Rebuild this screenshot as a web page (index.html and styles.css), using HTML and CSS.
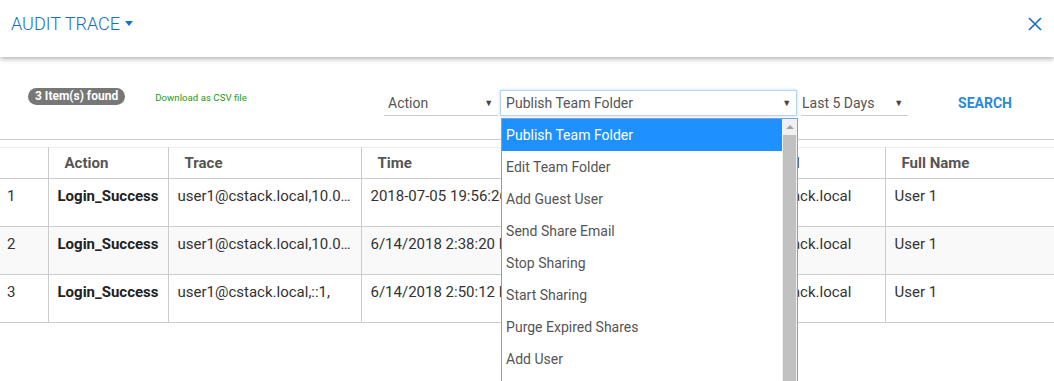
FILE: index.html
```html
<!DOCTYPE html>
<html>

<head>
    <meta name="viewport" content="width=device-width, initial-scale=1">
    <link rel="stylesheet" href="styles.css">
</head>

<body>
    <!-- Barra superior -->
    <div class="topbar">
        <span class="title">AUDIT TRACE</span>
        <svg class="title-caret" width="8" height="5" viewBox="0 0 8 5"><path d="M0 0h8L4 5z" fill="#1a6fc4"/></svg>
        <svg class="close" width="16" height="16" viewBox="0 0 16 16">
            <path d="M2 2L14 14M14 2L2 14" stroke="#1a6fc4" stroke-width="1.7" fill="none"/>
        </svg>
    </div>

    <!-- Filtros -->
    <div class="toolbar">
        <span class="badge">3 Item(s) found</span>
        <a class="csv" href="#">Download as CSV file</a>

        <div class="filters">
            <div class="select plain action-select">
                <span>Action</span>
                <span class="arrow">&#9660;</span>
            </div>
            <div class="select focused type-select">
                <span>Publish Team Folder</span>
                <span class="arrow">&#9660;</span>

                <div class="dropdown">
                    <ul class="options">
                        <li class="selected">Publish Team Folder</li>
                        <li>Edit Team Folder</li>
                        <li>Add Guest User</li>
                        <li>Send Share Email</li>
                        <li>Stop Sharing</li>
                        <li>Start Sharing</li>
                        <li>Purge Expired Shares</li>
                        <li>Add User</li>
                    </ul>
                    <div class="scrollbar">
                        <div class="scroll-up"></div>
                        <div class="scroll-thumb"></div>
                    </div>
                </div>
            </div>
            <div class="select plain days-select">
                <span>Last 5 Days</span>
                <span class="arrow">&#9660;</span>
            </div>
            <a class="search" href="#">SEARCH</a>
        </div>
    </div>

    <!-- Tabla de resultados -->
    <table class="grid">
        <colgroup>
            <col style="width:48px">
            <col style="width:120px">
            <col style="width:193px">
            <col style="width:352px">
            <col style="width:172px">
            <col style="width:169px">
        </colgroup>
        <thead>
            <tr>
                <th></th>
                <th>Action</th>
                <th>Trace</th>
                <th>Time</th>
                <th class="email-h">User Email</th>
                <th>Full Name</th>
            </tr>
        </thead>
        <tbody>
            <tr>
                <td class="num">1</td>
                <td class="act">Login_Success</td>
                <td class="trace">user1@cstack.local,10.0.0.52,</td>
                <td>2018-07-05 19:56:26</td>
                <td class="email">user1@cstack.local</td>
                <td>User 1</td>
            </tr>
            <tr class="alt">
                <td class="num">2</td>
                <td class="act">Login_Success</td>
                <td class="trace">user1@cstack.local,10.0.0.52,</td>
                <td>6/14/2018 2:38:20 PM</td>
                <td class="email">user1@cstack.local</td>
                <td>User 1</td>
            </tr>
            <tr>
                <td class="num">3</td>
                <td class="act">Login_Success</td>
                <td class="trace">user1@cstack.local,::1,</td>
                <td>6/14/2018 2:50:12 PM</td>
                <td class="email">user1@cstack.local</td>
                <td>User 1</td>
            </tr>
        </tbody>
    </table>
</body>

</html>
```

FILE: styles.css
```css
/* Estilos de la pagina de auditoria */
html,
body {
    height: 381px;
}

body {
    margin: 0;
    font-family: Roboto, "Liberation Sans", Arial, sans-serif;
    color: #333;
    background: #fff;
    overflow: hidden;
}

.topbar {
    height: 57px;
    display: flex;
    align-items: center;
    padding: 0 11px;
    background: #fff;
    box-shadow: 0 2px 5px rgba(0, 0, 0, 0.3);
    position: relative;
    z-index: 2;
}

.title {
    font-size: 18px;
    font-weight: 300;
    color: #1a6fc4;
    margin-top: -11px;
}

.title-caret {
    margin: -10px 0 0 5px;
}

.close {
    margin: -10px 0 0 auto;
}

.toolbar {
    height: 83px;
    display: flex;
    align-items: flex-start;
    border-bottom: 1px solid #ccc;
    box-sizing: border-box;
    padding-left: 28px;
}

.badge {
    margin-top: 31px;
    height: 17px;
    line-height: 17px;
    padding: 0 7px;
    border-radius: 9px;
    background: #777;
    color: #fff;
    font-size: 12px;
    font-weight: bold;
}

.csv {
    margin: 35px 0 0 30px;
    font-size: 9.7px;
    color: #1c9a1c;
    text-decoration: none;
}

.filters {
    display: flex;
    align-items: flex-start;
    margin-left: auto;
    margin-top: 33px;
}

.select {
    position: relative;
    height: 26px;
    display: flex;
    align-items: center;
    font-size: 14px;
    color: #555;
    box-sizing: border-box;
}

.select .arrow {
    font-size: 9px;
    color: #444;
    margin-left: auto;
}

.plain {
    border-bottom: 1px solid #ccc;
}

.action-select {
    width: 114px;
    padding: 0 5px 0 4px;
    margin-right: 2px;
}

.focused {
    width: 297px;
    padding: 0 5px 0 5px;
    border: 1px solid #b8d3f2;
    box-shadow: 0 0 3px rgba(80, 150, 230, 0.35);
}

.days-select {
    width: 107px;
    padding: 0 5px 0 1px;
    margin-left: 4px;
}

.search {
    margin: 5px 42px 0 50px;
    font-size: 14px;
    font-weight: bold;
    color: #2a8ad8;
    text-decoration: none;
}

.dropdown {
    position: absolute;
    top: 27px;
    left: 0;
    width: 297px;
    height: 280px;
    box-sizing: border-box;
    border: 1px solid #7f9fd6;
    background: #fff;
    display: flex;
    z-index: 5;
}

.options {
    list-style: none;
    margin: 0;
    padding: 0;
    flex: 1;
}

.options li {
    height: 32px;
    line-height: 32px;
    padding-left: 4px;
    color: #555;
    font-size: 14px;
}

.options li.selected {
    background: #1e90ff;
    color: #fff;
}

.scrollbar {
    width: 15px;
    background: #f0f0f0;
    display: flex;
    flex-direction: column;
    align-items: center;
}

.scroll-up {
    margin-top: 6px;
    width: 0;
    height: 0;
    border-left: 4px solid transparent;
    border-right: 4px solid transparent;
    border-bottom: 4px solid #a3a3a3;
}

.scroll-thumb {
    margin-top: 6px;
    width: 13px;
    flex: 1;
    background: #c1c1c1;
}

.grid {
    width: 1054px;
    margin-top: 7px;
    border-collapse: collapse;
    table-layout: fixed;
    font-size: 15px;
    border-top: 1px solid #eee;
}

.grid th {
    height: 30px;
    padding: 0 16px;
    text-align: left;
    color: #555;
    font-weight: bold;
    border-left: 1px solid #ccc;
    border-bottom: 1px solid #ccc;
    white-space: nowrap;
}

.grid th.email-h {
    padding-left: 14px;
}

.grid th:first-child,
.grid td:first-child {
    border-left: none;
}

.grid td {
    height: 48px;
    box-sizing: border-box;
    padding: 8px 9px;
    vertical-align: top;
    line-height: 18px;
    border-left: 1px solid #ccc;
    border-bottom: 1px solid #ccc;
    white-space: nowrap;
    overflow: hidden;
    text-overflow: ellipsis;
    color: #333;
}

.grid td.num {
    padding-left: 7px;
}

.grid td.act {
    font-weight: bold;
    color: #222;
}

.grid td.email {
    padding-left: 7px;
}

.grid tr.alt td {
    background: #f9f9f9;
}
```
